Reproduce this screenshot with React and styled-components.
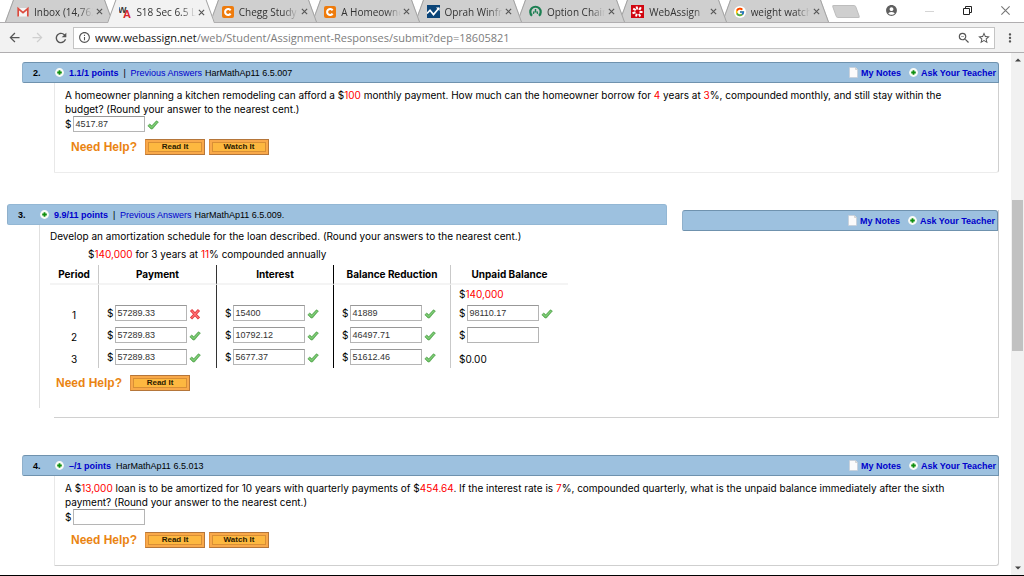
import React from 'react';

import styled, { createGlobalStyle, css } from 'styled-components';
import {
  MdAccountCircle,
  MdArrowBack,
  MdArrowForward,
  MdInfoOutline,
  MdMoreVert,
  MdRefresh,
  MdStarBorder,
  MdZoomOut,
} from 'react-icons/md';
import { FcGoogle } from 'react-icons/fc';

const chromeFont = "'Open Sans', 'Noto Sans', sans-serif";
const bodyFont = "Inter, Verdana, sans-serif";
const labelFont = "Arial, 'Liberation Sans', sans-serif";

const headerColor = '#9dc1df';
const headerBorder = '#6f92ae';
const linkColor = '#0000cc';
const chromeBorder = '#b0aeb0';

const GlobalStyle = createGlobalStyle`
  * {
    box-sizing: border-box;
  }
  body {
    margin: 0;
    background: #fff;
  }
  button {
    border: 0;
    padding: 0;
    background: none;
  }
`;

const Window = styled.div`
  display: flex;
  flex-direction: column;
  min-height: 100vh;
  border-bottom: 1px solid #000;
  font-family: ${bodyFont};
  font-size: 10px;
  line-height: 14px;
  color: #000;
  overflow: hidden;
`;

/* browser chrome */

const TabStrip = styled.div`
  display: flex;
  height: 23px;
  border-bottom: 1px solid ${chromeBorder};
  font-family: ${chromeFont};
`;

const Tabs = styled.div`
  display: flex;
  flex: 1;
  min-width: 0;
  padding-left: 5px;
`;

const Tab = styled.div`
  position: relative;
  z-index: ${({ $order }) => $order};
  display: flex;
  align-items: center;
  flex: 1;
  min-width: 0;
  padding: 1px 2px 0 12px;
  margin-bottom: ${({ $active }) => ($active ? '-1px' : '0')};

  &::before,
  &::after {
    content: '';
    position: absolute;
    z-index: -1;
    top: 0;
    bottom: 0;
    background: ${({ $active }) => ($active ? '#f2f2f2' : '#cfcfcf')};
  }
  &::before {
    left: 0;
    right: 30%;
    border-left: 1px solid #a2a2a2;
    transform: skewX(-20deg);
    transform-origin: bottom;
  }
  &::after {
    left: 30%;
    right: -5px;
    border-right: 1px solid #a2a2a2;
    transform: skewX(20deg);
    transform-origin: bottom;
  }
`;

const TabTitle = styled.span`
  flex: 1;
  min-width: 0;
  margin-left: 5px;
  overflow: hidden;
  white-space: nowrap;
  font-size: 10px;
  color: #333;
  mask-image: linear-gradient(to right, #000 75%, transparent 100%);
`;

const TabClose = styled.button`
  display: flex;
  justify-content: center;
  width: 12px;
`;

const StripControls = styled.div`
  display: flex;
  align-items: flex-start;
`;

const NewTab = styled.button`
  width: 24px;
  height: 13px;
  margin: 5px 14px 0 10px;
  border: 1px solid #bdbdbd;
  border-radius: 2px;
  background: #cfcfcf;
  transform: skewX(20deg);
`;

const WindowButton = styled.button`
  display: flex;
  align-items: center;
  justify-content: center;
  width: 38px;
  height: 20px;
  color: #5f5f5f;
`;

const Toolbar = styled.div`
  display: flex;
  align-items: center;
  height: 30px;
  background: #f2f2f2;
  border-bottom: 1px solid ${chromeBorder};
  padding: 0 7px 0 3px;
`;

const ToolButton = styled.button`
  display: flex;
  align-items: center;
  justify-content: center;
  width: 23px;
  color: ${({ $faded }) => ($faded ? '#cfcfcf' : '#555')};
`;

const AddressBar = styled.div`
  display: flex;
  align-items: center;
  flex: 1;
  min-width: 0;
  height: 22px;
  margin-left: 1px;
  padding: 0 2px 0 4px;
  gap: 4px;
  border: 1px solid #c4c4c4;
  background: #fff;
  color: #555;
`;

const Url = styled.span`
  flex: 1;
  overflow: hidden;
  white-space: nowrap;
  font-family: ${chromeFont};
  font-size: 11px;
  color: #7c7c7c;

  b {
    font-weight: 400;
    color: #111;
  }
`;

const BarIcon = styled.button`
  display: flex;
  justify-content: center;
  width: 16px;
  color: #555;
`;

const MenuButton = styled.button`
  display: flex;
  justify-content: center;
  width: 14px;
  margin-left: 8px;
  color: #555;
`;

/* page */

const Viewport = styled.div`
  display: flex;
  flex: 1;
`;

const Page = styled.main`
  flex: 1;
  min-width: 0;
  padding: 9px 12px 8px 7px;
`;

const ScrollTrack = styled.div`
  display: flex;
  flex-direction: column;
  width: 13px;
  padding: 0 1px;
  background: #f1f1f1;
`;

const ScrollArrow = styled.button`
  display: flex;
  align-items: center;
  justify-content: center;
  height: 13px;
`;

const ScrollGap = styled.div`
  flex: ${({ $size }) => $size};
`;

const ScrollThumb = styled.div`
  flex: 150;
  background: #c1c1c1;
`;

const Question = styled.section`
  margin-left: 15px;
`;

const QuestionHeader = styled.header`
  display: flex;
  align-items: center;
  height: 21px;
  padding: 0 2px 0 10px;
  background: ${headerColor};
  border: 1px solid ${({ $plain }) => ($plain ? '#93b7d4' : headerBorder)};
  border-left-color: #8fb0cb;
  border-radius: 3px 3px 0 2px;
  font-family: ${labelFont};
  font-size: 9px;
  white-space: nowrap;

  a {
    color: ${linkColor};
    text-decoration: none;
  }
`;

const Number = styled.strong`
  width: 22px;
`;

const Points = styled.a`
  margin: 0 5px;
  font-weight: 700;
`;

const Previous = styled.span`
  margin-right: 3px;

  a {
    margin-left: 2px;
  }
`;

const HeaderLinks = styled.nav`
  display: flex;
  align-items: center;
  margin-left: auto;
  font-weight: 700;

  a {
    display: flex;
    align-items: center;
    gap: 3px;
    margin-left: 8px;
  }
`;

const QuestionBody = styled.div`
  margin-left: 32px;
  padding: 5px 30px 17px 10px;
  border: 1px solid #e8e8e8;
  border-top: 0;
  border-right-color: #cfcfcf;
  border-bottom-color: ${({ $strong }) => ($strong ? '#cfcfcf' : '#ececec')};
  border-radius: 0 0 3px 0;
`;

const Text = styled.p`
  margin: 0;
`;

const LoanText = styled.p`
  margin: 4px 0 4px 38px;
`;

const Value = styled.span`
  color: #f00;
`;

const AnswerRow = styled.label`
  display: flex;
  align-items: center;
  gap: 2px;
  height: 16px;
  line-height: 16px;
`;

const AnswerInput = styled.input`
  width: 72px;
  height: 16px;
  margin: 0;
  padding: 0 2px 1px 1px;
  border: 1px solid #b5b5b5;
  border-top-color: #989898;
  border-radius: 0;
  background: #fff;
  font-family: ${labelFont};
  font-size: 9px;
  color: #333;
  outline: none;
`;

const HelpRow = styled.div`
  display: flex;
  align-items: center;
  gap: 4px;
  margin-top: 7px;
  padding-left: 6px;
`;

const HelpTitle = styled.span`
  margin-right: 4px;
  font-family: ${labelFont};
  font-size: 12px;
  font-weight: 700;
  color: #ea8412;
`;

const HelpButton = styled.button`
  width: 60px;
  height: 16px;
  border: 1px solid #b5763a;
  border-left-color: #e08f3c;
  background: #fdb840;
  box-shadow: inset 0 0 0 2px #f9a94a, inset 0 0 0 3px #d98f35;
  font-family: ${labelFont};
  font-size: 8px;
  font-weight: 700;
  line-height: 14px;
  color: #2b1a00;
`;

const SplitQuestion = styled.section`
  margin: 31px 0 37px;
`;

const SplitRow = styled.div`
  display: flex;
  gap: 15px;
`;

const LeftPane = styled.div`
  flex: 660;
  min-width: 0;
  padding-bottom: 9px;
`;

const LeftBody = styled.div`
  margin-left: 32px;
  padding: 4px 10px 17px;
  border-left: 1px solid #e0e0e0;
`;

const RightPane = styled.div`
  flex: 316;
  margin-top: 6px;
  border-right: 1px solid #cfcfcf;
`;

const BottomRule = styled.div`
  height: 1px;
  margin-left: 47px;
  background: #d0d0d0;
`;

const Schedule = styled.table`
  width: 518px;
  table-layout: fixed;
  border-collapse: separate;
  border-spacing: 0;
`;

const cellBorder = css`
  border-right: ${({ $line }) => ($line ? `1px solid ${$line}` : '0')};
`;

const HeadCell = styled.th`
  ${cellBorder}
  width: ${({ $width }) => $width}px;
  height: 20px;
  padding: 0;
  border-bottom: 2px solid #f4f4f4;
  font-weight: 700;
  white-space: nowrap;
`;

const Cell = styled.td`
  ${cellBorder}
  height: ${({ $short }) => ($short ? '17px' : '22px')};
  padding: ${({ $low, $center }) => `${$low ? 4 : 0}px 0 0 ${$center ? 0 : 8}px`};
  text-align: ${({ $center }) => ($center ? 'center' : 'left')};
`;

const lines = ['#c9c9c9', '#333', '#000', '#c9c9c9', null];

const CheckIcon = () => (
  <svg width='12' height='16' viewBox='0 0 12 16' aria-label='correct'>
    <path d='M.8 9.8 2.8 8l2 1.8L9.4 4.8 11.4 6 5.4 13H4z' fill='#67bd5f' stroke='#4b9c46' strokeWidth='.6' />
    <path d='M2 9.3 4.8 11.4 10 5.8' fill='none' stroke='#93d48b' strokeWidth='.7' />
  </svg>
);

const CrossIcon = () => (
  <svg width='12' height='16' viewBox='0 0 12 16' aria-label='incorrect'>
    <path d='M2 5 10 13.5M10 5 2 13.5' stroke='#e0353b' strokeWidth='3' />
    <path d='M2.5 5.5 9.5 13M9.5 5.5 2.5 13' stroke='#ff7074' strokeWidth='1.2' />
  </svg>
);

const PlusIcon = () => (
  <svg width='9' height='9' viewBox='0 0 9 9'>
    <circle cx='4.5' cy='4.5' r='4.4' fill='#f8fbf6' />
    <path d='M4.5 2.2v4.6M2.2 4.5h4.6' stroke='#0f8f0f' strokeWidth='1.8' />
  </svg>
);

const NoteIcon = () => (
  <svg width='9' height='11' viewBox='0 0 9 11'>
    <path d='M.5.5h6l2 2v8h-8z' fill='#fbfbfb' stroke='#c5cdd5' strokeWidth='.7' />
    <path d='M6.5.5v2h2' fill='#e2e2e2' stroke='#bbb' strokeWidth='.5' />
  </svg>
);

const CloseIcon = ({ size = 7, color = '#555', weight = 1.3 }) => (
  <svg width={size} height={size} viewBox='0 0 8 8'>
    <path d='M1 1 7 7M7 1 1 7' stroke={color} strokeWidth={weight} />
  </svg>
);

const MailIcon = () => (
  <svg width='12' height='12' viewBox='0 0 12 12'>
    <path d='M1 2h10v8.5H1z' fill='#f4f4f4' />
    <path d='M1.2 10.5V2.6L6 6.6l4.8-4v7.9' fill='none' stroke='#dc4b3e' strokeWidth='1.7' />
  </svg>
);

const AssignIcon = () => (
  <svg width='12' height='14' viewBox='0 0 12 14' fontFamily='Liberation Sans' fontWeight='700'>
    <text x='-1' y='8' fontSize='9' fill='#3a3a3a'>W</text>
    <text x='4' y='13' fontSize='11' fill='#d9252b'>A</text>
  </svg>
);

const CheggIcon = () => (
  <svg width='12' height='12' viewBox='0 0 12 12'>
    <rect width='12' height='12' rx='2' fill='#ee7b0c' />
    <path d='M8.6 4.3A3 3 0 1 0 8.6 7.7' fill='none' stroke='#fff' strokeWidth='2.1' />
  </svg>
);

const ChartIcon = () => (
  <svg width='13' height='13' viewBox='0 0 13 13'>
    <rect width='13' height='13' fill='#0a4478' />
    <path d='M0 8.5 3 5.2 6.5 9.6 12 3' fill='none' stroke='#fff' strokeWidth='1.7' />
    <path d='M9 2.5h3.5V6z' fill='#fff' />
  </svg>
);

const OptionIcon = () => (
  <svg width='13' height='13' viewBox='0 0 13 13'>
    <path d='M3 10.8A5.2 5.2 0 1 1 10 10.8' fill='none' stroke='#1c7f52' strokeWidth='2.2' />
    <path d='M6.5 4v3.5M4.4 8.8 5 6.4M8.6 8.8 8 6.4' fill='none' stroke='#1c7f52' strokeWidth='1.4' />
  </svg>
);

const BurstIcon = () => (
  <svg width='13' height='13' viewBox='0 0 13 13'>
    <rect width='13' height='13' fill='#d1060f' />
    <g stroke='#fff' strokeWidth='2'>
      <path d='M5.5 1.5l1 3M9.8 2.2 8.4 5M11.5 7 8.5 7M9.2 11.5 8 8.8M5 11.5l.8-2.8M1.5 8.2l3-1M2.2 3.6l2.6 1.6' />
    </g>
  </svg>
);

const GoogleIcon = () => (
  <svg width='12' height='12' viewBox='0 0 12 12'>
    <circle cx='6' cy='6' r='6' fill='#fff' />
    <FcGoogle x='1' y='1' width='10' height='10' />
  </svg>
);

const Triangle = ({ up }) => (
  <svg width='6' height='4' viewBox='0 0 6 4'>
    <path d={up ? 'M0 3.5 3 .5 6 3.5z' : 'M0 .5h6L3 3.5z'} fill='#444' />
  </svg>
);

const tabs = [
  { title: 'Inbox (14,762', icon: MailIcon },
  { title: 'S18 Sec 6.5 L', icon: AssignIcon, active: true },
  { title: 'Chegg Study', icon: CheggIcon },
  { title: 'A Homeowne', icon: CheggIcon },
  { title: 'Oprah Winfre', icon: ChartIcon },
  { title: 'Option Chain', icon: OptionIcon },
  { title: 'WebAssign', icon: BurstIcon },
  { title: 'weight watch', icon: GoogleIcon },
];

const schedule = [
  { period: 1, answers: [['57289.33', 'wrong'], ['15400', 'right'], ['41889', 'right'], ['98110.17', 'right']] },
  { period: 2, answers: [['57289.83', 'right'], ['10792.12', 'right'], ['46497.71', 'right'], ['', null]] },
  { period: 3, answers: [['57289.83', 'right'], ['5677.37', 'right'], ['51612.46', 'right']] },
];

const columns = [
  ['Period', 49],
  ['Payment', 118],
  ['Interest', 117],
  ['Balance Reduction', 117],
  ['Unpaid Balance', 117],
];

const Answer = ({ label, value = '', mark }) => (
  <AnswerRow>
    $
    <AnswerInput type='text' aria-label={label} defaultValue={value} />
    {mark === 'right' && <CheckIcon />}
    {mark === 'wrong' && <CrossIcon />}
  </AnswerRow>
);

const Help = ({ items }) => (
  <HelpRow>
    <HelpTitle>Need Help?</HelpTitle>
    {items.map((item) => (
      <HelpButton key={item} type='button'>
        {item}
      </HelpButton>
    ))}
  </HelpRow>
);

const HeaderInfo = ({ number, points, previous, source }) => (
  <>
    <Number>{number}.</Number>
    <PlusIcon />
    <Points href='#points'>{points} points</Points>
    {previous && (
      <Previous>
        | <a href='#previous'>Previous Answers</a>
      </Previous>
    )}
    <span>{source}</span>
  </>
);

const HeaderActions = () => (
  <HeaderLinks>
    <a href='#notes'>
      <NoteIcon />
      My Notes
    </a>
    <a href='#ask'>
      <PlusIcon />
      Ask Your Teacher
    </a>
  </HeaderLinks>
);

const BrowserTabs = () => (
  <TabStrip>
    <Tabs>
      {tabs.map(({ title, icon: Icon, active }, index) => (
        <Tab key={title} $active={active} $order={active ? 20 : tabs.length - index}>
          <Icon />
          <TabTitle>{title}</TabTitle>
          <TabClose type='button' aria-label={`Close ${title}`}>
            <CloseIcon />
          </TabClose>
        </Tab>
      ))}
    </Tabs>
    <StripControls>
      <NewTab type='button' aria-label='New tab' />
      <WindowButton type='button' aria-label='Profile'>
        <MdAccountCircle size={13} />
      </WindowButton>
      <WindowButton type='button' aria-label='Minimize'>
        <svg width='9' height='9' viewBox='0 0 9 9'>
          <path d='M0 5.5h9' stroke='#d5d5d5' />
        </svg>
      </WindowButton>
      <WindowButton type='button' aria-label='Restore'>
        <svg width='9' height='9' viewBox='0 0 9 9'>
          <path d='M.5 2.5h6v6h-6zM2.5 2V.5h6v6H7' fill='none' stroke='#222' />
        </svg>
      </WindowButton>
      <WindowButton type='button' aria-label='Close window'>
        <CloseIcon size={11} color='#777' weight={0.8} />
      </WindowButton>
    </StripControls>
  </TabStrip>
);

const BrowserToolbar = () => (
  <Toolbar>
    <ToolButton type='button' aria-label='Back'>
      <MdArrowBack size={15} />
    </ToolButton>
    <ToolButton type='button' aria-label='Forward' $faded>
      <MdArrowForward size={15} />
    </ToolButton>
    <ToolButton type='button' aria-label='Reload'>
      <MdRefresh size={16} />
    </ToolButton>
    <AddressBar>
      <MdInfoOutline size={13} />
      <Url>
        <b>www.webassign.net</b>/web/Student/Assignment-Responses/submit?dep=18605821
      </Url>
      <BarIcon type='button' aria-label='Zoom'>
        <MdZoomOut size={14} />
      </BarIcon>
      <BarIcon type='button' aria-label='Bookmark'>
        <MdStarBorder size={14} />
      </BarIcon>
    </AddressBar>
    <MenuButton type='button' aria-label='Menu'>
      <MdMoreVert size={16} />
    </MenuButton>
  </Toolbar>
);

const ScheduleTable = () => (
  <Schedule>
    <thead>
      <tr>
        {columns.map(([name, width], i) => (
          <HeadCell key={name} $width={width} $line={lines[i]}>
            {name}
          </HeadCell>
        ))}
      </tr>
    </thead>
    <tbody>
      <tr>
        {lines.slice(0, 4).map((line, i) => (
          <Cell key={i} $short $line={line} />
        ))}
        <Cell $short>
          $<Value>140,000</Value>
        </Cell>
      </tr>
      {schedule.map(({ period, answers }) => (
        <tr key={period}>
          <Cell $center $low $line={lines[0]}>
            {period}
          </Cell>
          {answers.map(([value, mark], i) => (
            <Cell key={columns[i + 1][0]} $line={lines[i + 1]}>
              <Answer label={`${columns[i + 1][0]}, period ${period}`} value={value} mark={mark} />
            </Cell>
          ))}
          {answers.length < 4 && <Cell $low>$0.00</Cell>}
        </tr>
      ))}
    </tbody>
  </Schedule>
);

const App = () => (
  <Window>
    <GlobalStyle />
    <BrowserTabs />
    <BrowserToolbar />
    <Viewport>
      <Page>
        <Question>
          <QuestionHeader>
            <HeaderInfo number={2} points='1.1/1' previous source='HarMathAp11 6.5.007' />
            <HeaderActions />
          </QuestionHeader>
          <QuestionBody>
            <Text>
              A homeowner planning a kitchen remodeling can afford a $<Value>100</Value> monthly payment. How much can
              the homeowner borrow for <Value>4</Value> years at <Value>3</Value>%, compounded monthly, and still stay
              within the budget? (Round your answer to the nearest cent.)
            </Text>
            <Answer label='Loan amount' value='4517.87' mark='right' />
            <Help items={['Read It', 'Watch It']} />
          </QuestionBody>
        </Question>

        <SplitQuestion>
          <SplitRow>
            <LeftPane>
              <QuestionHeader $plain>
                <HeaderInfo number={3} points='9.9/11' previous source='HarMathAp11 6.5.009.' />
              </QuestionHeader>
              <LeftBody>
                <Text>Develop an amortization schedule for the loan described. (Round your answers to the nearest cent.)</Text>
                <LoanText>
                  $<Value>140,000</Value> for 3 years at <Value>11</Value>% compounded annually
                </LoanText>
                <ScheduleTable />
                <Help items={['Read It']} />
              </LeftBody>
            </LeftPane>
            <RightPane>
              <QuestionHeader>
                <HeaderActions />
              </QuestionHeader>
            </RightPane>
          </SplitRow>
          <BottomRule />
        </SplitQuestion>

        <Question>
          <QuestionHeader>
            <HeaderInfo number={4} points='–/1' source='HarMathAp11 6.5.013' />
            <HeaderActions />
          </QuestionHeader>
          <QuestionBody $strong>
            <Text>
              A $<Value>13,000</Value> loan is to be amortized for 10 years with quarterly payments of $
              <Value>454.64</Value>. If the interest rate is <Value>7</Value>%, compounded quarterly, what is the unpaid
              balance immediately after the sixth payment? (Round your answer to the nearest cent.)
            </Text>
            <Answer label='Unpaid balance' />
            <Help items={['Read It', 'Watch It']} />
          </QuestionBody>
        </Question>
      </Page>
      <ScrollTrack>
        <ScrollArrow type='button' aria-label='Scroll up'>
          <Triangle up />
        </ScrollArrow>
        <ScrollGap $size={134} />
        <ScrollThumb />
        <ScrollGap $size={211} />
        <ScrollArrow type='button' aria-label='Scroll down'>
          <Triangle />
        </ScrollArrow>
      </ScrollTrack>
    </Viewport>
  </Window>
);

export default App;
